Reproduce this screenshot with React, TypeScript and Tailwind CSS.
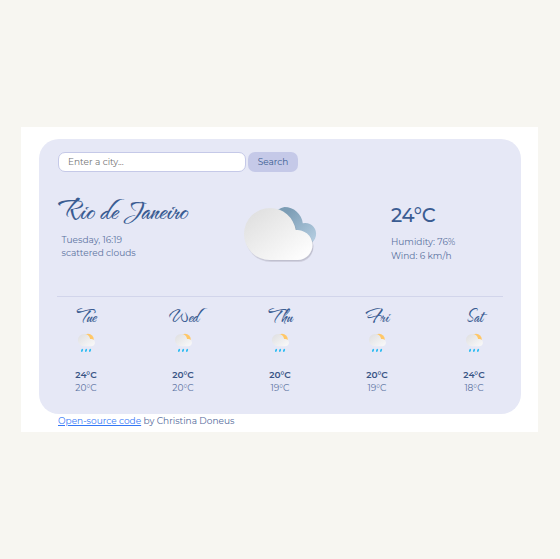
const script = "font-['The_Nautigal',Hurricane,cursive] font-bold text-[#3a5c92]";

const days = [
  { name: 'Tue', max: '24°C', min: '20°C' },
  { name: 'Wed', max: '20°C', min: '20°C' },
  { name: 'Thu', max: '20°C', min: '19°C' },
  { name: 'Fri', max: '20°C', min: '19°C' },
  { name: 'Sat', max: '24°C', min: '18°C' },
];

function CloudIcon() {
  return (
    <svg className="block h-[60px] w-[76px]" viewBox="0 0 76 60">
      <defs>
        <linearGradient id="cloudFront" x1="0" y1="0" x2="1" y2="1">
          <stop offset="0.1" stopColor="#e0e0e0" />
          <stop offset="0.9" stopColor="#fdfdfd" />
        </linearGradient>
        <linearGradient id="cloudBack" x1="0" y1="0" x2="1" y2="0.8">
          <stop offset="0.3" stopColor="#7c9db5" />
          <stop offset="1" stopColor="#b2cbdf" />
        </linearGradient>
        <filter id="cloudShade" x="-10%" y="-10%" width="120%" height="125%">
          <feDropShadow dx="1" dy="1.6" stdDeviation="0.5" floodColor="#6b6674" floodOpacity="0.3" />
        </filter>
      </defs>
      <path
        d="M41.500 4a18.500 18.500 0 0 1 18.300 16.200A10.900 10.900 0 1 1 60 41.500H43a19 19 0 0 1-1.500-37.500z"
        fill="url(#cloudBack)"
      />
      <path
        d="M27 5a26 26 0 0 1 25.700 22.100A15 15 0 1 1 54.500 57H27a26 26 0 0 1 0-52z"
        fill="url(#cloudFront)"
        filter="url(#cloudShade)"
      />
    </svg>
  );
}

function RainIcon() {
  return (
    <svg className="block h-5 w-[18px]" viewBox="0 0 18 20">
      <defs>
        <linearGradient id="rainCloud" x1="0" y1="0" x2="1" y2="1">
          <stop offset="0" stopColor="#dedee0" />
          <stop offset="1" stopColor="#fafafa" />
        </linearGradient>
      </defs>
      <circle cx="11" cy="6.500" r="5.800" fill="#ffc767" />
      <path
        d="M7 1a6.200 6.200 0 0 1 6.100 5.100A3.700 3.700 0 1 1 13.300 13.200H7A6.100 6.100 0 0 1 7 1z"
        fill="url(#rainCloud)"
      />
      <path
        d="M5.300 16.700l-.5 1.300M9.300 16.700l-.5 1.300M13.300 16.700l-.5 1.300"
        stroke="#25b9f2"
        strokeWidth="1.700"
        strokeLinecap="round"
      />
    </svg>
  );
}

export default function App() {
  return (
    <div className="h-[559px] w-[560px] bg-[#f7f6f1] pt-[127px] pl-[21px] font-[Montserrat,Inter,sans-serif] text-[9px] text-[#5b729f]">
      <main className="h-[305px] w-[516.500px] bg-white pt-3 pl-[18px]">
        <section className="h-[275px] w-[482px] rounded-[20px] bg-[#e6e8f6] px-[19px] pt-[13px]">
          <form className="flex h-5 gap-0.5">
            <input
              className="w-[188px] rounded-[7px] border border-[#c5c9e8] bg-white px-[9px] text-[9px] outline-none placeholder:text-[#757575]"
              placeholder="Enter a city..."
            />
            <button type="button" className="w-[50px] rounded-[7px] bg-[#c5c9e8] text-[9px] text-[#3a5c92]">
              Search
            </button>
          </form>

          <div className="flex h-[124px]">
            <div className="w-[185px] pt-[22px]">
              <h1 className={`${script} flex h-[34px] items-center text-[32.500px] leading-[34px] whitespace-nowrap`}>
                Rio de Janeiro
              </h1>
              <p className="mt-[5px] pl-[3.500px] leading-[13px]">
                Tuesday, 16:19
                <br />
                scattered clouds
              </p>
            </div>
            <div className="w-[148px] pt-[31px]">
              <CloudIcon />
            </div>
            <div className="pt-[31px]">
              <div className="h-[24px] text-[19.500px] leading-[24px] font-medium tracking-[-0.3px] text-[#3a5c92]">24°C</div>
              <p className="mt-[8px] leading-[13.500px]">
                Humidity: 76%
                <br />
                Wind: 6 km/h
              </p>
            </div>
          </div>

          <div className="-ml-px flex w-[446px] justify-between border-t border-[#d2d5eb] pt-[9px]">
            {days.map((day) => (
              <div key={day.name} className="flex w-[58px] flex-col items-center">
                <div className={`${script} flex h-[22px] items-center justify-center text-[20px] leading-[22px]`}>
                  {day.name}
                </div>
                <div className="mt-[5px]">
                  <RainIcon />
                </div>
                <div className="mt-[15px] leading-[13px] font-semibold text-[#3a5585]">{day.max}</div>
                <div className="leading-[14px]">{day.min}</div>
              </div>
            ))}
          </div>
        </section>
        <footer className="pl-[19px] leading-[14px] text-[#52699a]">
          <a className="text-[#3478f6] underline">Open-source code</a> by Christina Doneus
        </footer>
      </main>
    </div>
  );
}
